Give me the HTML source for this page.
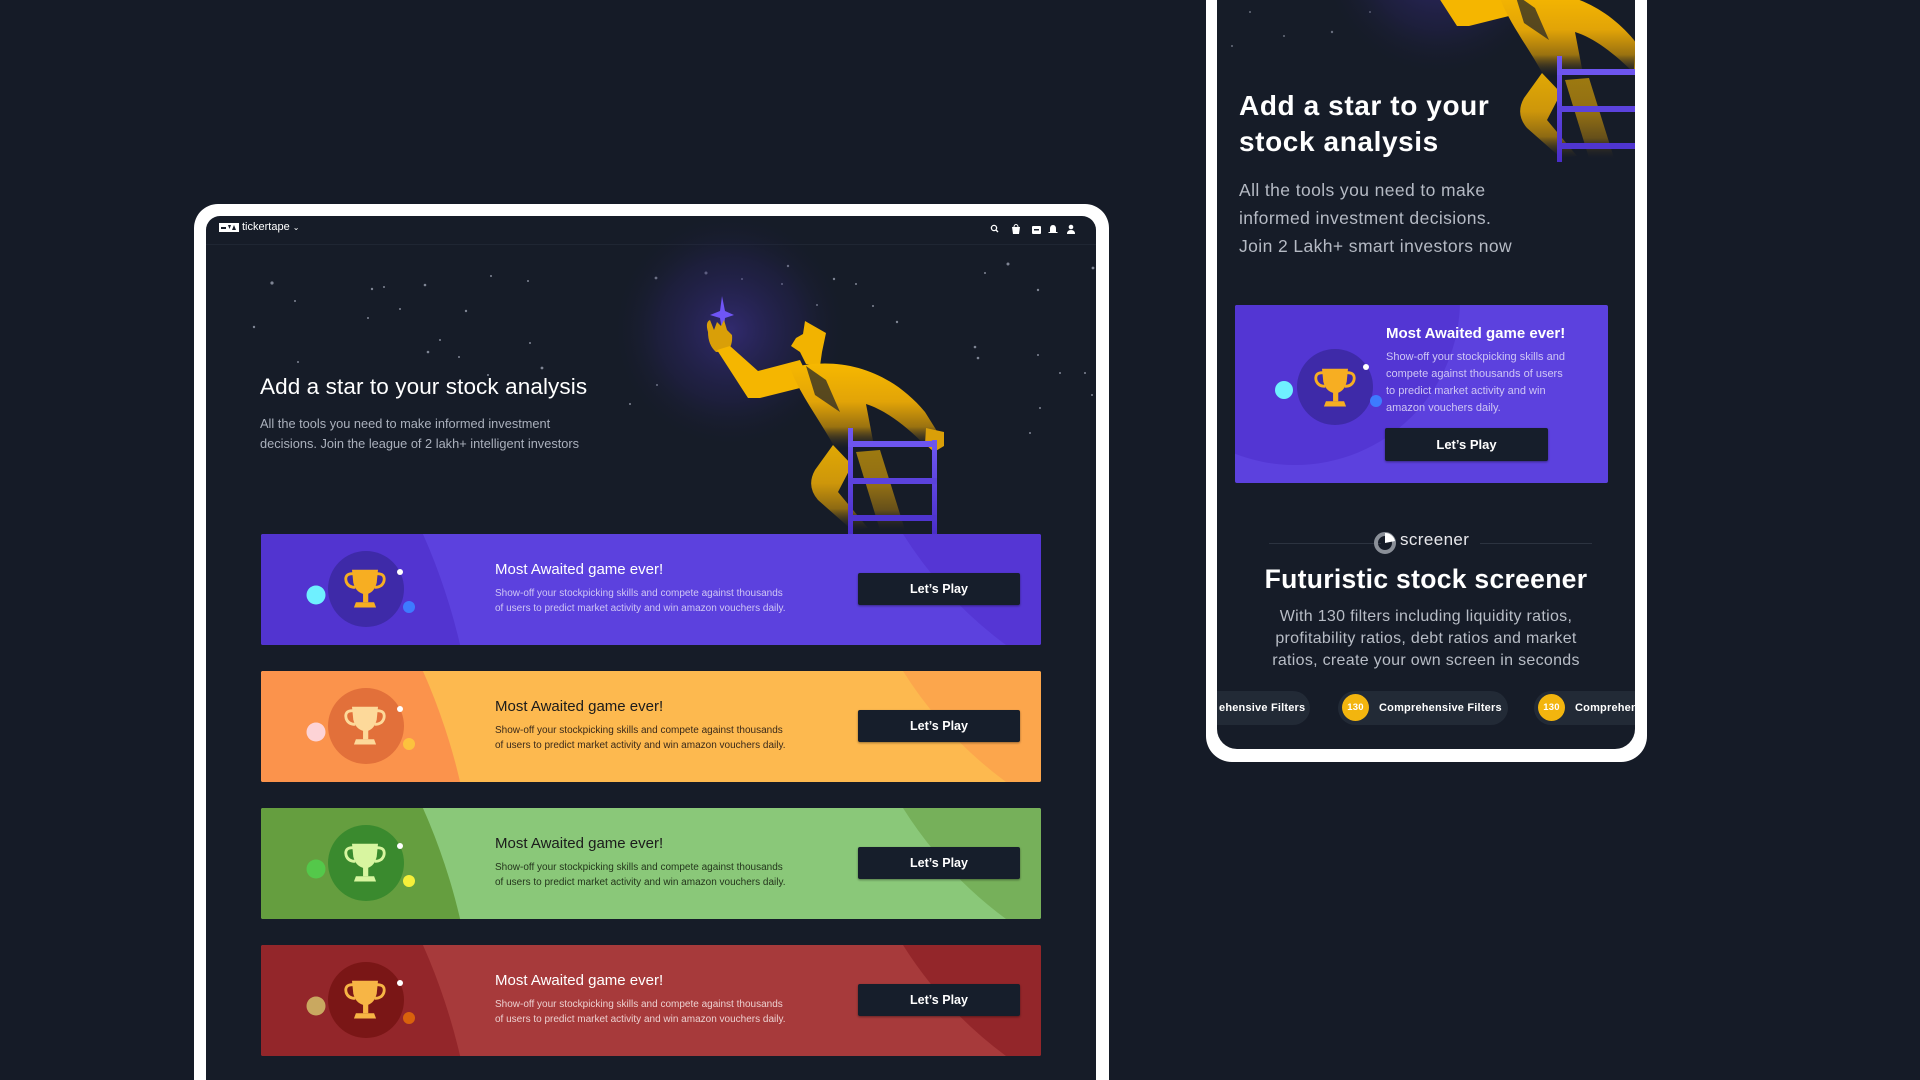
<!DOCTYPE html>
<html><head><meta charset="utf-8"><style>
*{margin:0;padding:0;box-sizing:border-box}
html,body{width:1920px;height:1080px;overflow:hidden}
body{background:#151b27;position:relative;font-family:"Liberation Sans",sans-serif}
.abs{position:absolute}
.frameL{left:194px;top:204px;width:915px;height:876px;background:#fff;border-radius:24px 24px 0 0}
.screenL{left:206px;top:216px;width:890px;height:864px;background:#161c28;border-radius:14px 14px 0 0;overflow:hidden}
.frameP{left:1206px;top:-40px;width:441px;height:802px;background:#fff;border-radius:26px}
.screenP{left:1217px;top:-40px;width:418px;height:789px;background:#161c28;border-radius:0 0 20px 20px;overflow:hidden}
.t{position:absolute;white-space:nowrap}
.btn{position:absolute;background:#161e2b;color:#fff;font-weight:bold;text-align:center;border-radius:2px;box-shadow:0 1px 2px rgba(0,0,0,.4)}
.card{position:absolute;left:261px;width:780px;height:111px;overflow:hidden;border-radius:2px}
.card svg{position:absolute;left:0;top:0}
.card .ti{position:absolute;left:234px;top:27px;font-size:15px;white-space:nowrap}
.card .de{position:absolute;left:234px;top:52px;font-size:10px;line-height:15px;white-space:nowrap}
.card .btn{left:597px;top:39px;width:162px;height:32px;font-size:12.5px;line-height:32px}
.chip{position:absolute;top:691px;height:34px;background:#222a36;border-radius:17px;color:#fff;font-size:11px;font-weight:bold;letter-spacing:.2px;line-height:34px;white-space:nowrap;overflow:hidden}
.coin{display:inline-block;width:27px;height:27px;border-radius:50%;background:#f3b50e;color:#fff;font-size:9.5px;text-align:center;line-height:27px;margin:0 10px 0 4px;vertical-align:middle;position:relative;top:-1px}
</style></head><body>
<svg width="0" height="0" style="position:absolute"><defs>
<symbol id="troph" viewBox="0 0 40 40"><path d="M10 6H30L29 16Q27 24 20.5 25Q13 24 11 16Z"/><path d="M18.5 24H22.5V31H18.5Z"/><path d="M13 31H27L28.5 35H11.5Z"/><path d="M10.5 9Q4 9 5.5 15Q7 19.5 12.5 19.5" fill="none" stroke-width="2.2" stroke="currentColor"/><path d="M29.5 9Q36 9 34.5 15Q33 19.5 27.5 19.5" fill="none" stroke-width="2.2" stroke="currentColor"/></symbol>
<linearGradient id="gold" x1="0" y1="0" x2="0" y2="1"><stop offset="0" stop-color="#f7b800"/><stop offset=".45" stop-color="#e2a407"/><stop offset=".75" stop-color="#9a7210"/><stop offset="1" stop-color="#1b1f26" stop-opacity=".2"/></linearGradient>
<linearGradient id="lad" x1="0" y1="0" x2="0" y2="1"><stop offset="0" stop-color="#7058f2"/><stop offset="1" stop-color="#4a2ec9"/></linearGradient>
<radialGradient id="glow"><stop offset="0" stop-color="#3a2f86" stop-opacity=".75"/><stop offset=".6" stop-color="#2a2460" stop-opacity=".35"/><stop offset="1" stop-color="#161c28" stop-opacity="0"/></radialGradient>
<g id="man">
<circle cx="730" cy="330" r="120" fill="url(#glow)"/>
<path d="M722 296L725 311L734 315L725 318L723 336L720 318L710 315L720 311Z" fill="#6f55f5"/>
<path d="M708 332Q705 322 710 320L714 330L717 322L721 326L724 320L727 330L732 335Q733 345 727 352L716 352Q708 345 708 332Z" fill="#d99f08"/>
<path d="M717 350L730 346L758 371L800 360L812 385L760 398L748 398Z" fill="#f5b600"/>
<path d="M805 321L812 325L826 333L822 352L820 366L806 364L800 352L791 346L796 338L803 334Z" fill="#f2b300"/>
<path d="M790 368C840 355 890 370 925 412L940 436L926 446C905 425 885 410 866 404L874 446L835 448C820 420 800 395 790 368Z" fill="url(#gold)"/>
<path d="M806 366L815 395L840 412L826 380Z" fill="#1b1f2a" opacity=".7"/>
<path d="M926 428L944 432L944 446L934 452L925 444Z" fill="#d99f08"/>
<path d="M833 445L815 470Q806 486 818 500L852 530L868 528L838 492L852 465Z" fill="url(#gold)" opacity=".9"/>
<path d="M856 452L880 530L905 530L880 450Z" fill="url(#gold)" opacity=".6"/>
<rect x="848" y="428" width="5" height="106" fill="url(#lad)"/>
<rect x="932" y="440" width="5" height="94" fill="url(#lad)"/>
<rect x="848" y="441" width="89" height="6" fill="#6d55ee"/>
<rect x="848" y="478" width="89" height="6" fill="#5b42dc"/>
<rect x="848" y="515" width="89" height="6" fill="#4f35cf"/>
</g>
</defs></svg>

<div class="abs frameL"></div>
<div class="abs screenL">
<div class="abs" style="left:0;top:0;width:890px;height:29px;border-bottom:1px solid #1f2633"></div>
<svg class="abs" style="left:13px;top:7px" width="20" height="9"><rect width="20" height="9" fill="#fff"/><path d="M9 2h3l-1.5 4zM13 7l2-5 2 5z" fill="#161c28"/><rect x="2" y="4" width="5" height="2" fill="#161c28"/></svg>
<div class="t" style="left:36px;top:5px;color:#fff;font-size:11px">tickertape <span style="font-size:8px">⌄</span></div>
<svg class="abs" style="left:783px;top:6px" width="100" height="14" fill="#fff"><circle cx="5" cy="6" r="2.6" fill="none" stroke="#fff" stroke-width="1.3"/><path d="M7 8l2 2" stroke="#fff" stroke-width="1.3"/><path d="M23 5h8l-1 7h-6z"/><path d="M25 5a2 2.5 0 0 1 4 0" fill="none" stroke="#fff"/><rect x="43" y="4" width="9" height="8" rx="1"/><rect x="45" y="7" width="5" height="1.5" fill="#161c28"/><path d="M64 3q3 0 3 4v3h1.5v1h-9v-1h1.5v-3q0-4 3-4z"/><circle cx="82" cy="5" r="2.3"/><path d="M78 12q0-4 4-4t4 4z"/></svg>
<svg class="abs" style="left:-206px;top:-216px" width="1110" height="1116">
<g fill="#9aa0b0" opacity=".8">
<circle cx="272" cy="283" r="1.6"/><circle cx="372" cy="289" r="1.2"/><circle cx="384" cy="287" r="1"/><circle cx="425" cy="285" r="1.3"/><circle cx="491" cy="276" r="1"/><circle cx="528" cy="281" r="1"/><circle cx="254" cy="327" r="1.2"/><circle cx="295" cy="301" r="1"/><circle cx="400" cy="309" r="1"/><circle cx="440" cy="340" r="1"/><circle cx="466" cy="311" r="1.2"/><circle cx="368" cy="318" r="1"/><circle cx="428" cy="352" r="1.3"/><circle cx="488" cy="375" r="1"/><circle cx="530" cy="343" r="1"/><circle cx="542" cy="368" r="1.4"/><circle cx="459" cy="357" r="1"/><circle cx="298" cy="362" r="1"/><circle cx="656" cy="278" r="1.4"/><circle cx="706" cy="273" r="1.5"/><circle cx="742" cy="279" r="1"/><circle cx="782" cy="284" r="1"/><circle cx="788" cy="266" r="1.2"/><circle cx="834" cy="279" r="1.2"/><circle cx="856" cy="284" r="1"/><circle cx="873" cy="306" r="1"/><circle cx="897" cy="322" r="1.2"/><circle cx="1008" cy="264" r="1.5"/><circle cx="985" cy="273" r="1"/><circle cx="1038" cy="290" r="1.2"/><circle cx="1093" cy="268" r="1.4"/><circle cx="975" cy="347" r="1.3"/><circle cx="1038" cy="355" r="1"/><circle cx="1060" cy="373" r="1"/><circle cx="1085" cy="373" r="1"/><circle cx="978" cy="358" r="1.3"/><circle cx="817" cy="305" r="1"/><circle cx="1040" cy="408" r="1"/><circle cx="1030" cy="433" r="1"/><circle cx="657" cy="385" r="1"/><circle cx="630" cy="404" r="1"/><circle cx="1092" cy="395" r="1"/></g>
<use href="#man"/>
</svg>
<div class="t" style="left:54px;top:158px;color:#fff;font-size:22.5px;letter-spacing:.1px">Add a star to your stock analysis</div>
<div class="t" style="left:54px;top:198px;color:#aab0bc;font-size:12.8px;line-height:20px">All the tools you need to make informed investment<br>decisions. Join the league of 2 lakh+ intelligent investors</div>
</div>

<div class="card" style="top:534px">
<svg width="780" height="111"><rect width="780" height="111" fill="#5c41de"/><circle cx="-400" cy="250" r="615" fill="#5234d0"/><path d="M642 0A410 410 0 0 0 745 111H780V0Z" fill="#5536d4"/><circle cx="105" cy="55" r="38" fill="#3e2aa8"/><circle cx="55" cy="61" r="9.5" fill="#6ff0ff"/><circle cx="139" cy="38" r="3" fill="#fff"/><circle cx="148" cy="73" r="6" fill="#3d7bff"/><use href="#troph" x="78" y="28" width="52" height="52" fill="#f7ae22" color="#f7ae22"/></svg>
<div class="ti" style="color:#fff">Most Awaited game ever!</div>
<div class="de" style="color:#cfc6f5">Show-off your stockpicking skills and compete against thousands<br>of users to predict market activity and win amazon vouchers daily.</div>
<div class="btn">Let’s Play</div>
</div>
<div class="card" style="top:671px">
<svg width="780" height="111"><rect width="780" height="111" fill="#fdb94f"/><circle cx="-400" cy="250" r="615" fill="#fb934c"/><path d="M642 0A410 410 0 0 0 745 111H780V0Z" fill="#fca64c"/><circle cx="105" cy="55" r="38" fill="#e2703a"/><circle cx="55" cy="61" r="9.5" fill="#fdd3d6"/><circle cx="139" cy="38" r="3" fill="#fff"/><circle cx="148" cy="73" r="6" fill="#fcc23e"/><use href="#troph" x="78" y="28" width="52" height="52" fill="#fdd99a" color="#fdd99a"/></svg>
<div class="ti" style="color:#1b1b1b">Most Awaited game ever!</div>
<div class="de" style="color:#3a2a1a">Show-off your stockpicking skills and compete against thousands<br>of users to predict market activity and win amazon vouchers daily.</div>
<div class="btn">Let’s Play</div>
</div>
<div class="card" style="top:808px">
<svg width="780" height="111"><rect width="780" height="111" fill="#8ac879"/><circle cx="-400" cy="250" r="615" fill="#659e3f"/><path d="M642 0A410 410 0 0 0 745 111H780V0Z" fill="#76b05a"/><circle cx="105" cy="55" r="38" fill="#3a8a2e"/><circle cx="55" cy="61" r="9.5" fill="#54c84a"/><circle cx="139" cy="38" r="3" fill="#fff"/><circle cx="148" cy="73" r="6" fill="#f5ef3a"/><use href="#troph" x="78" y="28" width="52" height="52" fill="#d8f5a0" color="#d8f5a0"/></svg>
<div class="ti" style="color:#1b1b1b">Most Awaited game ever!</div>
<div class="de" style="color:#24361c">Show-off your stockpicking skills and compete against thousands<br>of users to predict market activity and win amazon vouchers daily.</div>
<div class="btn">Let’s Play</div>
</div>
<div class="card" style="top:945px">
<svg width="780" height="111"><rect width="780" height="111" fill="#a73a3b"/><circle cx="-400" cy="250" r="615" fill="#93262a"/><path d="M642 0A410 410 0 0 0 745 111H780V0Z" fill="#93262a"/><circle cx="105" cy="55" r="38" fill="#7a1616"/><circle cx="55" cy="61" r="9.5" fill="#c9a860"/><circle cx="139" cy="38" r="3" fill="#fff"/><circle cx="148" cy="73" r="6" fill="#d9620c"/><use href="#troph" x="78" y="28" width="52" height="52" fill="#f7b545" color="#f7b545"/></svg>
<div class="ti" style="color:#fff">Most Awaited game ever!</div>
<div class="de" style="color:#ecd0d0">Show-off your stockpicking skills and compete against thousands<br>of users to predict market activity and win amazon vouchers daily.</div>
<div class="btn">Let’s Play</div>
</div>

<div class="abs frameP"></div>
<div class="abs screenP">
<svg class="abs" style="left:-1217px;top:40px" width="1640" height="760">
<g fill="#8c92a2" opacity=".7"><circle cx="1250" cy="12" r="1"/><circle cx="1284" cy="36" r="1"/><circle cx="1332" cy="32" r="1.2"/><circle cx="1370" cy="12" r="1"/><circle cx="1474" cy="20" r="1"/><circle cx="1232" cy="46" r="1"/></g>
<g transform="translate(709,-372)"><use href="#man"/></g>
</svg>
<div class="t" style="left:22px;top:128px;color:#fff;font-size:28px;line-height:36px;font-weight:bold;letter-spacing:.6px">Add a star to your<br>stock analysis</div>
<div class="t" style="left:22px;top:216px;color:#b5bac4;font-size:17.5px;line-height:28px;letter-spacing:.4px">All the tools you need to make<br>informed investment decisions.<br>Join 2 Lakh+ smart investors now</div>
<div class="abs" style="left:18px;top:345px;width:373px;height:178px;overflow:hidden;border-radius:2px">
<svg width="373" height="178" style="position:absolute;left:0;top:0"><rect width="373" height="178" fill="#5c41de"/><circle cx="60" cy="-5" r="165" fill="#5336d3"/><circle cx="100" cy="82" r="38" fill="#3e2aa8"/><circle cx="49" cy="85" r="9" fill="#6ff0ff"/><circle cx="131" cy="62" r="3" fill="#fff"/><circle cx="141" cy="96" r="6" fill="#3d7bff"/><use href="#troph" x="74" y="56" width="52" height="52" fill="#f7ae22" color="#f7ae22"/></svg>
<div class="t" style="left:151px;top:20px;color:#fff;font-size:15px;font-weight:bold">Most Awaited game ever!</div>
<div class="t" style="left:151px;top:44px;color:#cfc6f5;font-size:11px;line-height:17px">Show-off your stockpicking skills and<br>compete against thousands of users<br>to predict market activity and win<br>amazon vouchers daily.</div>
<div class="btn" style="left:150px;top:123px;width:163px;height:33px;font-size:13px;line-height:33px">Let’s Play</div>
</div>
<div class="abs" style="left:52px;top:583px;width:112px;height:1px;background:#2c3340"></div>
<div class="abs" style="left:263px;top:583px;width:112px;height:1px;background:#2c3340"></div>
<svg class="abs" style="left:157px;top:572px" width="22" height="22"><circle cx="11" cy="11" r="9" fill="none" stroke="#8a8f98" stroke-width="4"/><path d="M11 11L11 1A10 10 0 0 1 21 9Z" fill="#fff"/></svg>
<div class="t" style="left:183px;top:570px;color:#e8e8ec;font-size:17px;letter-spacing:.4px">screener</div>
<div class="t" style="left:0;width:418px;text-align:center;top:604px;color:#fff;font-size:26.5px;font-weight:bold;letter-spacing:.3px">Futuristic stock screener</div>
<div class="t" style="left:0;width:418px;text-align:center;top:646px;color:#b8bdc6;font-size:16px;line-height:22px;letter-spacing:.3px">With 130 filters including liquidity ratios,<br>profitability ratios, debt ratios and market<br>ratios, create your own screen in seconds</div>
</div>
<div class="chip" style="left:1217px;width:93px;border-radius:0 17px 17px 0"><span style="padding-left:2px">ehensive Filters</span></div>
<div class="chip" style="left:1338px;width:170px"><span class="coin">130</span>Comprehensive Filters</div>
<div class="chip" style="left:1534px;width:101px;border-radius:17px 0 0 17px"><span class="coin">130</span>Comprehensive Filters</div>
</body></html>
